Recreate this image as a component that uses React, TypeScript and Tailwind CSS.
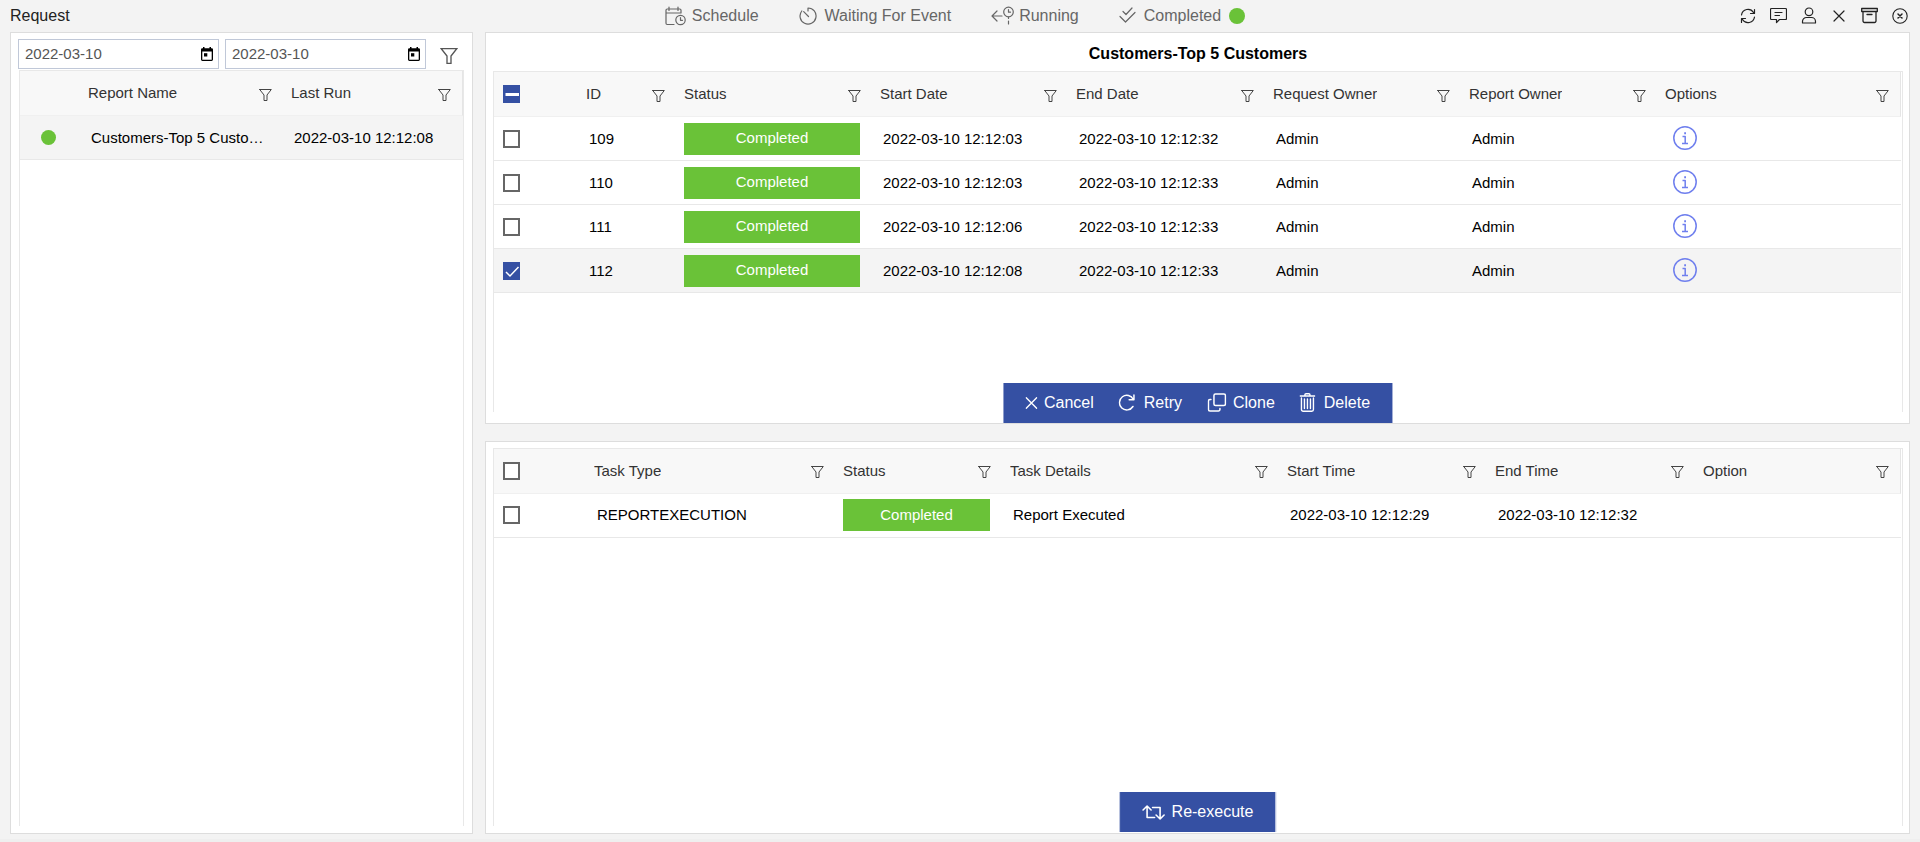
import { useEffect, useRef, useState } from "react";
import type { ReactNode } from "react";
import clsx from "clsx";

type Request = {
  id: number;
  start: string;
  end: string;
  requestOwner: string;
  reportOwner: string;
};

const REQUESTS: Request[] = [
  { id: 109, start: "2022-03-10 12:12:03", end: "2022-03-10 12:12:32", requestOwner: "Admin", reportOwner: "Admin" },
  { id: 110, start: "2022-03-10 12:12:03", end: "2022-03-10 12:12:33", requestOwner: "Admin", reportOwner: "Admin" },
  { id: 111, start: "2022-03-10 12:12:06", end: "2022-03-10 12:12:33", requestOwner: "Admin", reportOwner: "Admin" },
  { id: 112, start: "2022-03-10 12:12:08", end: "2022-03-10 12:12:33", requestOwner: "Admin", reportOwner: "Admin" },
];

type IconProps = { className?: string; box: string; width?: number; children: ReactNode };

const Icon = ({ className, box, width = 1, children }: IconProps) => (
  <svg
    viewBox={box}
    className={clsx("shrink-0", className)}
    fill="none"
    stroke="currentColor"
    strokeWidth={width}
    strokeLinecap="round"
    strokeLinejoin="round"
    aria-hidden="true"
  >
    {children}
  </svg>
);

const FunnelIcon = ({ className }: { className: string }) => (
  <Icon box="0 0 13 12" className={className}>
    <path d="M.7.500h11.600L8 6v5.500H5V6L.7.500z" strokeLinejoin="miter" />
  </Icon>
);

const ScheduleIcon = () => (
  <Icon box="0 0 21 20" className="h-5 w-[21px]" width={1.200}>
    <path d="M9 18.500H2.200A1.200 1.200 0 0 1 1 17.300V4.200A1.200 1.200 0 0 1 2.200 3h12.600A1.200 1.200 0 0 1 16 4.200V7M1 7h15M4 1v3.500M13 1v3.500" />
    <circle cx="15.500" cy="14" r="4.700" />
    <path d="M15.500 11.500v2.800h2" />
  </Icon>
);

const WaitingIcon = () => (
  <Icon box="0 0 18 18" className="size-[18px]" width={1.200}>
    <path d="M9 4V1a8 8 0 1 1-6.200 3M4.700 4.700l4.800 4.800" />
  </Icon>
);

const RunningIcon = () => (
  <Icon box="0 0 23 20" className="h-5 w-[23px]" width={1.200}>
    <path d="M11 10H1M6 5l-5 5 5 5M17.500 11v1.500M17.500 15v3" />
    <circle cx="17.500" cy="6" r="4.800" />
    <path d="M17.500 3.500V6.200h2" />
  </Icon>
);

const DoubleCheckIcon = () => (
  <Icon box="0 0 17 17" className="size-[17px]" width={1.200}>
    <path d="M4 4.500l3 3 6-6.500M1 9.500l5.500 5.500L16 5.500" />
  </Icon>
);

const STAGES = [
  { label: "Schedule", icon: <ScheduleIcon />, gap: "gap-[6px]" },
  { label: "Waiting For Event", icon: <WaitingIcon />, gap: "gap-2" },
  { label: "Running", icon: <RunningIcon />, gap: "gap-[5px]" },
  { label: "Completed", icon: <DoubleCheckIcon />, gap: "gap-2" },
];

const TOOLS = [
  {
    label: "Refresh",
    icon: (
      <Icon box="0 0 16 16" className="size-4" width={1.200}>
        <path d="M1.500 7a6.500 6.500 0 0 1 12-2.500M14.500 1.500v4h-4M14.500 9a6.500 6.500 0 0 1-12 2.500M1.500 14.500v-4h4" />
      </Icon>
    ),
  },
  {
    label: "Comments",
    icon: (
      <Icon box="0 0 17 17" className="size-[17px]" width={1.200}>
        <path d="M1.500 1.500h14a1 1 0 0 1 1 1v9a1 1 0 0 1-1 1H9.500l-3 3v-3h-5a1 1 0 0 1-1-1v-9a1 1 0 0 1 1-1z" />
        <path d="M5 5.500h7M5 8.500h4.500" />
      </Icon>
    ),
  },
  {
    label: "Account",
    icon: (
      <Icon box="0 0 16 17" className="h-[17px] w-4" width={1.200}>
        <circle cx="8" cy="4.800" r="3.800" />
        <path d="M1.500 16v-1.500a4 4 0 0 1 4-4h5a4 4 0 0 1 4 4V16z" />
      </Icon>
    ),
  },
  {
    label: "Dismiss",
    icon: (
      <Icon box="0 0 16 16" className="size-4" width={1.200}>
        <path d="M3 3l10 10M13 3L3 13" />
      </Icon>
    ),
  },
  {
    label: "Archive",
    icon: (
      <Icon box="0 0 17 17" className="size-[17px]" width={1.300}>
        <path d="M.7 1.500h15.600v3H.7zM2 4.500V14a1.500 1.500 0 0 0 1.500 1.500h10A1.500 1.500 0 0 0 15 14V4.500M6 7.500h5" />
      </Icon>
    ),
  },
  {
    label: "Close",
    icon: (
      <Icon box="0 0 16 16" className="size-4" width={1.100}>
        <circle cx="8" cy="8" r="7.200" />
        <path d="M6 6l4 4M10 6l-4 4" strokeWidth="1.500" />
      </Icon>
    ),
  },
];

const ACTIONS = [
  {
    label: "Cancel",
    className: "gap-[7px]",
    icon: (
      <Icon box="0 0 12 12" className="size-3" width={1.400}>
        <path d="M.8.8l10.400 10.400M11.200.8L.8 11.200" />
      </Icon>
    ),
  },
  {
    label: "Retry",
    className: "gap-2",
    icon: (
      <Icon box="0 0 17 17" className="size-[17px]" width={1.500}>
        <path d="M15.500 1v4.800h-4.800M14.900 5.500A7.300 7.300 0 1 0 14.500 12.500" />
      </Icon>
    ),
  },
  {
    label: "Clone",
    className: "gap-[7px]",
    icon: (
      <Icon box="0 0 19 19" className="size-[19px]" width={1.500}>
        <rect x="6.500" y="1" width="11.500" height="11.500" rx="1.500" />
        <path d="M3.500 6.500h-1A1.500 1.500 0 0 0 1 8v8.500A1.500 1.500 0 0 0 2.500 18H11a1.500 1.500 0 0 0 1.500-1.500v-1" />
      </Icon>
    ),
  },
  {
    label: "Delete",
    className: "gap-2",
    icon: (
      <Icon box="0 0 16 19" className="h-[19px] w-4" width={1.400}>
        <path d="M.7 3h14.600M5.500 2.800V1.800a1 1 0 0 1 1-1h3a1 1 0 0 1 1 1v1M2 5v11.500A1.700 1.700 0 0 0 3.700 18.200h8.600a1.700 1.700 0 0 0 1.700-1.700V5M5 6v9.500M8 6v9.500M11 6v9.500" />
      </Icon>
    ),
  },
];

type CheckboxProps = {
  label: string;
  checked: boolean;
  indeterminate?: boolean;
  onChange: (checked: boolean) => void;
};

const Checkbox = ({ label, checked, indeterminate = false, onChange }: CheckboxProps) => {
  const ref = useRef<HTMLInputElement>(null);

  useEffect(() => {
    if (ref.current) ref.current.indeterminate = indeterminate;
  }, [indeterminate]);

  return (
    <span className="relative block h-[18px] w-[17px]">
      <input
        ref={ref}
        type="checkbox"
        aria-label={label}
        checked={checked}
        onChange={(e) => onChange(e.target.checked)}
        className="block h-full w-full appearance-none border-2 border-[#666] bg-white checked:border-[#3550a3] checked:bg-[#3550a3] indeterminate:border-[#3550a3] indeterminate:bg-[#3550a3]"
      />
      {(checked || indeterminate) && (
        <svg
          viewBox="0 0 17 18"
          className="pointer-events-none absolute inset-0 h-full w-full"
          fill="none"
          stroke="#fff"
          strokeWidth={indeterminate ? 3 : 1.500}
        >
          <path d={indeterminate ? "M2.500 9.500h13.500" : "M3 10l4 4 8.500-9"} />
        </svg>
      )}
    </span>
  );
};

const HeadCell = ({ children, last = false }: { children: string; last?: boolean }) => (
  <th
    className={clsx(
      "h-[45px] border-b border-[#f0f0f0] bg-[#f8f8f8] pr-[11px] pl-2 text-left font-normal text-[#333]",
      last && "border-r border-r-[#e5e5e5]"
    )}
  >
    <div className="flex items-center justify-between">
      <span className="truncate">{children}</span>
      <button type="button" aria-label={`Filter ${children}`} className="pt-[3px] text-[#444]">
        <FunnelIcon className="h-3 w-[13px]" />
      </button>
    </div>
  </th>
);

const EmptyHead = ({ children }: { children?: ReactNode }) => (
  <td className="h-[45px] border-b border-[#f0f0f0] bg-[#f8f8f8] pl-[9px]">{children}</td>
);

const Cell = ({ children }: { children?: ReactNode }) => (
  <td className="h-11 truncate border-b border-[#e8e8e8] px-[11px]">{children}</td>
);

const CheckCell = ({ children }: { children: ReactNode }) => (
  <td className="h-11 border-b border-[#e8e8e8] pl-[9px]">{children}</td>
);

const StatusCell = () => (
  <td className="h-11 border-b border-[#e8e8e8] pr-3 pl-2">
    <div className="flex h-8 items-center justify-center bg-[#6ac238] pb-px text-white">Completed</div>
  </td>
);

const DateField = ({ label }: { label: string }) => {
  const [value, setValue] = useState("2022-03-10");

  return (
    <div className="flex h-[30px] w-[201px] items-center border border-[#c0c8d8] bg-white pr-[5px] pl-[6px]">
      <input
        type="text"
        aria-label={label}
        value={value}
        onChange={(e) => setValue(e.target.value)}
        className="min-w-0 flex-1 text-[#555] outline-none"
      />
      <button type="button" aria-label={`Pick ${label.toLowerCase()}`} className="pb-px text-black">
        <svg viewBox="0 0 12 14" className="h-[14px] w-3" fill="currentColor">
          <path
            fillRule="evenodd"
            d="M2 0h1.500v1.300h5V0H10v1.300h.7A1.300 1.300 0 0 1 12 2.600v10A1.400 1.400 0 0 1 10.600 14H1.400A1.400 1.400 0 0 1 0 12.600v-10a1.300 1.300 0 0 1 1.300-1.300H2zM1.300 4.500v8.200h9.400V4.500z"
          />
          <path d="M3 6.200h3.300v3.300H3z" />
        </svg>
      </button>
    </div>
  );
};

const ReportList = () => (
  <section className="flex flex-col border border-[#ddd] bg-white pb-[7px]">
    <div className="mb-px flex items-start gap-[6px] pt-[6px] pl-[7px]">
      <DateField label="From date" />
      <DateField label="To date" />
      <button type="button" aria-label="Filter reports" className="ml-2 pt-[9px] text-[#555]">
        <FunnelIcon className="h-4 w-[18px]" />
      </button>
    </div>
    <div className="mx-2 flex-1 border border-b-0 border-[#e8e8e8]">
      <table className="w-full table-fixed border-separate border-spacing-0">
        <colgroup>
          <col className="w-[60px]" />
          <col className="w-[203px]" />
          <col />
        </colgroup>
        <thead>
          <tr>
            <EmptyHead />
            <HeadCell>Report Name</HeadCell>
            <HeadCell last>Last Run</HeadCell>
          </tr>
        </thead>
        <tbody>
          <tr className="bg-[#f4f4f4]">
            <td className="border-b border-[#e8e8e8] pl-[21px]">
              <span className="block size-[15px] rounded-full bg-[#6ac238]" />
            </td>
            <Cell>Customers-Top 5 Customers</Cell>
            <Cell>2022-03-10 12:12:08</Cell>
          </tr>
        </tbody>
      </table>
    </div>
  </section>
);

const RequestTable = () => {
  const [selected, setSelected] = useState<number[]>([112]);
  const all = selected.length === REQUESTS.length;

  const toggle = (id: number, checked: boolean) =>
    setSelected(checked ? [...selected, id] : selected.filter((s) => s !== id));

  return (
    <section className="relative flex min-h-0 flex-1 flex-col border border-[#ddd] bg-white pr-[6px] pb-[11px] pl-[7px]">
      <h2 className="flex h-[38px] items-center justify-center pt-1 text-base font-bold text-black">
        Customers-Top 5 Customers
      </h2>
      <div className="flex-1 border border-b-0 border-[#e8e8e8] pr-px">
        <table className="w-full table-fixed border-separate border-spacing-0">
          <colgroup>
            <col className="w-[84px]" />
            <col className="w-[98px]" />
            <col className="w-[196px]" />
            <col className="w-[196px]" />
            <col className="w-[197px]" />
            <col className="w-[196px]" />
            <col className="w-[196px]" />
            <col />
          </colgroup>
          <thead>
            <tr>
              <EmptyHead>
                <Checkbox
                  label="Select all requests"
                  checked={all}
                  indeterminate={selected.length > 0 && !all}
                  onChange={(checked) => setSelected(checked ? REQUESTS.map((r) => r.id) : [])}
                />
              </EmptyHead>
              <HeadCell>ID</HeadCell>
              <HeadCell>Status</HeadCell>
              <HeadCell>Start Date</HeadCell>
              <HeadCell>End Date</HeadCell>
              <HeadCell>Request Owner</HeadCell>
              <HeadCell>Report Owner</HeadCell>
              <HeadCell last>Options</HeadCell>
            </tr>
          </thead>
          <tbody>
            {REQUESTS.map((r) => (
              <tr key={r.id} className={clsx(selected.includes(r.id) && "bg-[#f4f4f4]")}>
                <CheckCell>
                  <Checkbox
                    label={`Select request ${r.id}`}
                    checked={selected.includes(r.id)}
                    onChange={(checked) => toggle(r.id, checked)}
                  />
                </CheckCell>
                <Cell>{r.id}</Cell>
                <StatusCell />
                <Cell>{r.start}</Cell>
                <Cell>{r.end}</Cell>
                <Cell>{r.requestOwner}</Cell>
                <Cell>{r.reportOwner}</Cell>
                <td className="border-b border-[#e8e8e8] pb-[2px] pl-4">
                  <button type="button" aria-label={`Details of request ${r.id}`} className="block text-[#6f7fee]">
                    <Icon box="0 0 24 24" className="size-6" width={1.500}>
                      <circle cx="12" cy="12" r="11.200" />
                      <path d="M9.500 10.500h2.700v7M9 17.500h6" strokeLinecap="butt" />
                      <path d="M11.200 7.300h1.800" strokeWidth="2" strokeLinecap="butt" />
                    </Icon>
                  </button>
                </td>
              </tr>
            ))}
          </tbody>
        </table>
      </div>
      {/* Toolbar floats over the grid */}
      <div className="absolute bottom-0 left-1/2 flex h-10 -translate-x-1/2 items-center gap-[25px] bg-[#3550a3] px-[22px] text-base text-white">
        {ACTIONS.map((a) => (
          <button key={a.label} type="button" className={clsx("flex items-center", a.className)}>
            {a.icon}
            {a.label}
          </button>
        ))}
      </div>
    </section>
  );
};

const TaskTable = () => {
  const [checked, setChecked] = useState(false);

  return (
    <section className="relative flex min-h-0 flex-1 flex-col border border-[#ddd] bg-white pt-[6px] pr-[6px] pb-[7px] pl-[7px]">
      <div className="flex-1 border border-b-0 border-[#e8e8e8] pr-px">
        <table className="w-full table-fixed border-separate border-spacing-0">
          <colgroup>
            <col className="w-[92px]" />
            <col className="w-[249px]" />
            <col className="w-[167px]" />
            <col className="w-[277px]" />
            <col className="w-[208px]" />
            <col className="w-[208px]" />
            <col />
          </colgroup>
          <thead>
            <tr>
              <EmptyHead>
                <Checkbox label="Select all tasks" checked={checked} onChange={setChecked} />
              </EmptyHead>
              <HeadCell>Task Type</HeadCell>
              <HeadCell>Status</HeadCell>
              <HeadCell>Task Details</HeadCell>
              <HeadCell>Start Time</HeadCell>
              <HeadCell>End Time</HeadCell>
              <HeadCell last>Option</HeadCell>
            </tr>
          </thead>
          <tbody>
            <tr className={clsx(checked && "bg-[#f4f4f4]")}>
              <CheckCell>
                <Checkbox label="Select task" checked={checked} onChange={setChecked} />
              </CheckCell>
              <Cell>REPORTEXECUTION</Cell>
              <StatusCell />
              <Cell>Report Executed</Cell>
              <Cell>2022-03-10 12:12:29</Cell>
              <Cell>2022-03-10 12:12:32</Cell>
              <Cell />
            </tr>
          </tbody>
        </table>
      </div>
      <button
        type="button"
        className="absolute bottom-px left-1/2 flex h-10 -translate-x-1/2 items-center gap-[7px] border-x border-[#c3cbe3] bg-[#3550a3] px-[22px] text-base text-white"
      >
        <Icon box="0 0 23 15" className="h-[15px] w-[23px]" width={1.600}>
          <path d="M1 5l4-4 4 4M5 1.500V12.500h7.500M10.500 2.500H18V13.500M14 10l4 4 4-4" />
        </Icon>
        Re-execute
      </button>
    </section>
  );
};

const App = () => {
  return (
    <div className="flex h-screen min-h-[640px] flex-col border-b-[3px] border-[#efefef] bg-[#f3f3f3] font-['Liberation_Sans',Arial,sans-serif] text-[15px] leading-5 text-black">
      <header className="grid h-8 shrink-0 grid-cols-[1fr_auto_1fr] items-center pr-3 pb-px pl-[10px] text-base">
        <h1 className="text-[#222]">Request</h1>
        <nav aria-label="Stages" className="flex items-center gap-10 pr-2 text-[#666]">
          {STAGES.map((s) => (
            <a key={s.label} href={`#${s.label}`} className={clsx("flex items-center", s.gap)}>
              {s.icon}
              {s.label}
              {s.label === "Completed" && <span className="size-4 rounded-full bg-[#6ac238]" />}
            </a>
          ))}
        </nav>
        <div className="flex items-center justify-end gap-[14px] text-[#222]">
          {TOOLS.map((t) => (
            <button key={t.label} type="button" aria-label={t.label}>
              {t.icon}
            </button>
          ))}
        </div>
      </header>
      <main className="grid min-h-0 flex-1 grid-cols-[463px_minmax(0,1fr)] gap-3 px-[10px] pb-[5px]">
        <ReportList />
        <div className="flex min-h-0 flex-col gap-[17px]">
          <RequestTable />
          <TaskTable />
        </div>
      </main>
    </div>
  );
};

export default App;
